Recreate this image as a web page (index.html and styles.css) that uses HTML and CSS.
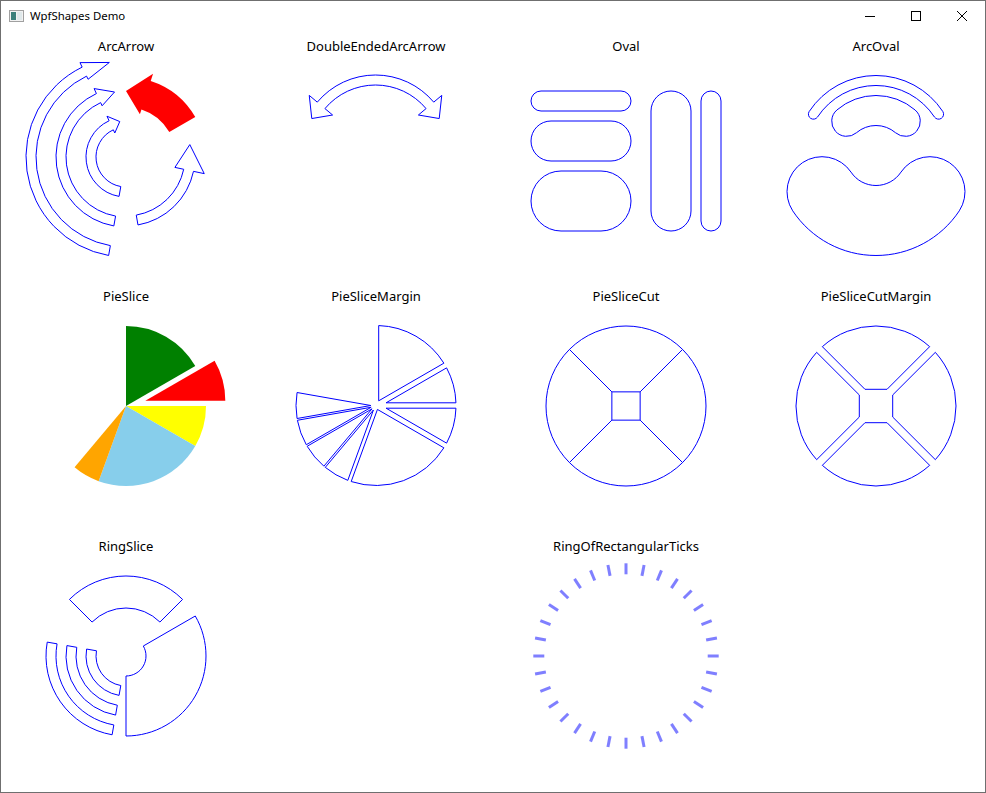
FILE: index.html
```html
<!DOCTYPE html>
<html lang="en">
<head>
<meta charset="utf-8">
<title>WpfShapes Demo</title>
<link rel="stylesheet" href="styles.css">
</head>
<body>
<div class="window">
  <div class="titlebar">
    <svg class="app-icon" viewBox="0 0 16 16" width="16" height="16">
      <rect x="1.5" y="2.5" width="14" height="11" fill="#f2f2f2" stroke="#a0a0a0"/>
      <rect x="3" y="4" width="5" height="8" fill="#3b7f7a"/>
      <rect x="9" y="4" width="5" height="8" fill="#dfe8ea"/>
    </svg>
    <span class="title">WpfShapes Demo</span>
    <div class="controls">
      <div class="ctl"><svg width="10" height="10" viewBox="0 0 10 10"><line x1="0" y1="5.5" x2="10" y2="5.5" class="glyph"/></svg></div>
      <div class="ctl"><svg width="10" height="10" viewBox="0 0 10 10"><rect x="0.5" y="0.5" width="9" height="9" class="glyph"/></svg></div>
      <div class="ctl"><svg width="10" height="10" viewBox="0 0 10 10"><path d="M0 0 L10 10 M10 0 L0 10" class="glyph"/></svg></div>
    </div>
  </div>
  <div class="content">
    <div class="cell">
      <div class="label">ArcArrow</div>
      <svg class="shape" viewBox="1 54 250 227">
        <path id="aa1" class="outline"/>
        <path id="aa2" class="outline"/>
        <path id="aa3" class="outline"/>
        <path id="aa4" class="red"/>
        <path id="aa5" class="outline"/>
      </svg>
    </div>
    <div class="cell">
      <div class="label">DoubleEndedArcArrow</div>
      <svg class="shape" viewBox="251 54 250 227">
        <path id="dea" class="outline"/>
      </svg>
    </div>
    <div class="cell">
      <div class="label">Oval</div>
      <svg class="shape" viewBox="501 54 250 227">
        <rect class="outline" x="531" y="91" width="100" height="20" rx="10"/>
        <rect class="outline" x="531" y="121" width="100" height="40" rx="20"/>
        <rect class="outline" x="531" y="171" width="100" height="60" rx="30"/>
        <rect class="outline" x="651" y="91" width="40" height="140" rx="20"/>
        <rect class="outline" x="701" y="91" width="20" height="140" rx="10"/>
      </svg>
    </div>
    <div class="cell">
      <div class="label">ArcOval</div>
      <svg class="shape" viewBox="751 54 250 227">
        <path id="ao1" class="outline"/>
        <path id="ao2" class="outline"/>
        <path id="ao3" class="outline"/>
      </svg>
    </div>

    <div class="cell">
      <div class="label">PieSlice</div>
      <svg class="shape" viewBox="1 304 250 227">
        <path id="ps1" class="f-green"/>
        <path id="ps2" class="f-red"/>
        <path id="ps3" class="f-yellow"/>
        <path id="ps4" class="f-sky"/>
        <path id="ps5" class="f-orange"/>
      </svg>
    </div>
    <div class="cell">
      <div class="label">PieSliceMargin</div>
      <svg class="shape" viewBox="251 304 250 227">
        <path id="pm1" class="outline"/>
        <path id="pm2" class="outline"/>
        <path id="pm3" class="outline"/>
        <path id="pm4" class="outline"/>
        <path id="pm5" class="outline"/>
        <path id="pm6" class="outline"/>
        <path id="pm7" class="outline"/>
        <path id="pm8" class="outline"/>
      </svg>
    </div>
    <div class="cell">
      <div class="label">PieSliceCut</div>
      <svg class="shape" viewBox="501 304 250 227">
        <circle class="outline" cx="626" cy="406" r="80"/>
        <rect class="outline" x="611.86" y="391.86" width="28.28" height="28.28"/>
        <path class="outline" d="M 611.86 391.86 L 569.43 349.43 M 640.14 391.86 L 682.57 349.43 M 640.14 420.14 L 682.57 462.57 M 611.86 420.14 L 569.43 462.57"/>
      </svg>
    </div>
    <div class="cell">
      <div class="label">PieSliceCutMargin</div>
      <svg class="shape" viewBox="751 304 250 227">
        <path id="pcm1" class="outline"/>
        <path id="pcm2" class="outline"/>
        <path id="pcm3" class="outline"/>
        <path id="pcm4" class="outline"/>
      </svg>
    </div>

    <div class="cell">
      <div class="label">RingSlice</div>
      <svg class="shape" viewBox="1 554 250 227">
        <path id="rs1" class="outline"/>
        <path id="rs2" class="outline"/>
        <path id="rs3" class="outline"/>
        <path id="rs4" class="outline"/>
        <path id="rs5" class="outline"/>
      </svg>
    </div>
    <div class="cell"></div>
    <div class="cell">
      <div class="label">RingOfRectangularTicks</div>
      <svg class="shape" viewBox="501 554 250 227">
        <g id="ticks" class="ticks"></g>
      </svg>
    </div>
    <div class="cell"></div>
  </div>
</div>
<script src="script.js"></script>
</body>
</html>
```

FILE: styles.css
```css
html, body {
  margin: 0;
  padding: 0;
  background: #ffffff;
}

body {
  font-family: "Noto Sans", "Open Sans", sans-serif;
  font-size: 13px;
  color: #000000;
}

.window {
  box-sizing: border-box;
  width: 986px;
  height: 793px;
  border: 1px solid #6f6f6f;
  background: #ffffff;
  overflow: hidden;
}

.titlebar {
  height: 30px;
  display: flex;
  align-items: center;
}

.app-icon {
  display: block;
  margin-left: 7px;
  flex: none;
}

.title {
  margin-left: 6px;
  font-size: 11.4px;
  line-height: 16px;
}

.controls {
  margin-left: auto;
  display: flex;
}

.ctl {
  width: 46px;
  height: 30px;
  display: flex;
  align-items: center;
  justify-content: center;
}

.ctl svg {
  display: block;
}

.glyph {
  fill: none;
  stroke: #000000;
  stroke-width: 1;
}

.content {
  display: grid;
  grid-template-columns: repeat(4, 250px);
  grid-auto-rows: 250px;
  width: 984px;
  height: 761px;
  overflow: hidden;
}

.cell {
  display: flex;
  flex-direction: column;
  align-items: center;
  min-width: 0;
}

.label {
  padding-top: 7px;
  height: 16px;
  line-height: 16px;
  white-space: nowrap;
}

.shape {
  display: block;
  flex: none;
  width: 250px;
  height: 227px;
}

.outline {
  fill: none;
  stroke: #0000ff;
  stroke-width: 1;
}

.red { fill: #ff0000; }
.f-green { fill: #008000; }
.f-red { fill: #ff0000; }
.f-yellow { fill: #ffff00; }
.f-sky { fill: #87ceeb; }
.f-orange { fill: #ffa500; }

.ticks line {
  stroke: #0000ff;
  stroke-opacity: 0.5;
  stroke-width: 3;
}
```

FILE: script.js
```js
(function () {
  var D = Math.PI / 180;
  function P(cx, cy, r, a) { return [cx + r * Math.cos(a * D), cy + r * Math.sin(a * D)]; }
  function s(p) { return p[0].toFixed(2) + ' ' + p[1].toFixed(2); }
  function A(cx, cy, r, a0, a1) {
    var d = a1 - a0;
    return ' A ' + r + ' ' + r + ' 0 ' + (Math.abs(d) > 180 ? 1 : 0) + ' ' + (d > 0 ? 1 : 0) + ' ' + s(P(cx, cy, r, a1));
  }
  function set(id, d) { var el = document.getElementById(id); if (el) { el.setAttribute('d', d); } }

  function ring(cx, cy, ri, ro, a0, a1) {
    return 'M ' + s(P(cx, cy, ro, a0)) + A(cx, cy, ro, a0, a1) +
      ' L ' + s(P(cx, cy, ri, a1)) + A(cx, cy, ri, a1, a0) + ' Z';
  }

  function arrow(o) {
    var cx = o.cx, cy = o.cy;
    return 'M ' + s(P(cx, cy, o.ro, o.a0)) + A(cx, cy, o.ro, o.a0, o.ab) +
      ' L ' + s(P(cx, cy, o.bo, o.ab)) +
      ' L ' + s(P(cx, cy, o.rt, o.at)) +
      ' L ' + s(P(cx, cy, o.bi, o.ab)) +
      ' L ' + s(P(cx, cy, o.ri, o.ab)) + A(cx, cy, o.ri, o.ab, o.a0) + ' Z';
  }

  function dbl(o) {
    var cx = o.cx, cy = o.cy;
    return 'M ' + s(P(cx, cy, o.ro, o.a0)) + A(cx, cy, o.ro, o.a0, o.a1) +
      ' L ' + s(P(cx, cy, o.bo, o.a1)) +
      ' L ' + s(P(cx, cy, o.rt, o.at1)) +
      ' L ' + s(P(cx, cy, o.bi, o.a1)) +
      ' L ' + s(P(cx, cy, o.ri, o.a1)) + A(cx, cy, o.ri, o.a1, o.a0) +
      ' L ' + s(P(cx, cy, o.bi, o.a0)) +
      ' L ' + s(P(cx, cy, o.rt, o.at0)) +
      ' L ' + s(P(cx, cy, o.bo, o.a0)) + ' Z';
  }

  function arcOval(cx, cy, rm, h, a0, a1) {
    var ro = rm + h, ri = rm - h;
    return 'M ' + s(P(cx, cy, ro, a0)) + A(cx, cy, ro, a0, a1) +
      ' A ' + h + ' ' + h + ' 0 0 1 ' + s(P(cx, cy, ri, a1)) +
      A(cx, cy, ri, a1, a0) +
      ' A ' + h + ' ' + h + ' 0 0 1 ' + s(P(cx, cy, ro, a0)) + ' Z';
  }

  function wedge(cx, cy, r, a0, a1, off) {
    var c = P(cx, cy, off || 0, (a0 + a1) / 2);
    return 'M ' + s(c) + ' L ' + s(P(c[0], c[1], r, a0)) + A(c[0], c[1], r, a0, a1) + ' Z';
  }

  /* slice whose two straight edges are shifted inwards by o0 / o1, arc kept on the centre */
  function marginSlice(cx, cy, R, a0, a1, o0, o1) {
    var u0 = [Math.cos(a0 * D), Math.sin(a0 * D)], u1 = [Math.cos(a1 * D), Math.sin(a1 * D)];
    var n0 = [-u0[1], u0[0]], n1 = [u1[1], -u1[0]];
    var p0 = [o0 * n0[0], o0 * n0[1]], p1 = [o1 * n1[0], o1 * n1[1]];
    function cr(a, b) { return a[0] * b[1] - a[1] * b[0]; }
    var t0 = cr([p1[0] - p0[0], p1[1] - p0[1]], u1) / cr(u0, u1);
    var apex = [cx + p0[0] + t0 * u0[0], cy + p0[1] + t0 * u0[1]];
    var s0 = Math.sqrt(R * R - o0 * o0), s1 = Math.sqrt(R * R - o1 * o1);
    var e0 = [cx + p0[0] + s0 * u0[0], cy + p0[1] + s0 * u0[1]];
    var e1 = [cx + p1[0] + s1 * u1[0], cy + p1[1] + s1 * u1[1]];
    var span = a1 - a0;
    return 'M ' + s(apex) + ' L ' + s(e0) + ' A ' + R + ' ' + R + ' 0 ' + (span > 180 ? 1 : 0) + ' 1 ' + s(e1) + ' Z';
  }

  function cutSlice(cx, cy, b, cut, off, R, h) {
    var hb = h * D, bb = b * D;
    function rot(u, v) {
      return [cx + u * Math.cos(bb) - v * Math.sin(bb), cy + u * Math.sin(bb) + v * Math.cos(bb)];
    }
    var t1 = (cut - off * Math.sin(hb)) / Math.cos(hb);
    var vc = off * Math.cos(hb) - t1 * Math.sin(hb);
    var t2 = Math.sqrt(R * R - off * off);
    var uo = off * Math.sin(hb) + t2 * Math.cos(hb);
    var vo = off * Math.cos(hb) - t2 * Math.sin(hb);
    return 'M ' + s(rot(cut, vc)) + ' L ' + s(rot(uo, vo)) +
      ' A ' + R + ' ' + R + ' 0 0 1 ' + s(rot(uo, -vo)) +
      ' L ' + s(rot(cut, -vc)) + ' Z';
  }

  /* ArcArrow */
  var C1x = 126, C1y = 157;
  set('aa1', arrow({ cx: C1x, cy: C1y, ri: 90, ro: 100, a0: 100, ab: 244, at: 260, rt: 96, bo: 105, bi: 86.5 }));
  set('aa2', arrow({ cx: C1x, cy: C1y, ri: 60, ro: 70, a0: 100, ab: 245, at: 260, rt: 66, bo: 75.5, bi: 56.5 }));
  set('aa3', arrow({ cx: C1x, cy: C1y, ri: 30, ro: 40, a0: 100, ab: 245, at: 260, rt: 36, bo: 45, bi: 26.5 }));
  set('aa4', arrow({ cx: C1x, cy: C1y, ri: 50, ro: 80, a0: 330, ab: 288, at: 270, rt: 66, bo: 87.5, bi: 45 }));
  set('aa5', arrow({ cx: C1x, cy: C1y, ri: 59, ro: 69, a0: 80, ab: 12, at: -11, rt: 65, bo: 80, bi: 50 }));

  /* DoubleEndedArcArrow */
  set('dea', dbl({ cx: 375.5, cy: 151, ri: 66, ro: 76, a0: 220, a1: 320, at0: 207, at1: 333, rt: 71.5, bo: 86.5, bi: 56 }));

  /* ArcOval */
  set('ao1', arcOval(876, 155.5, 75, 5, 213.3, 326.7));
  set('ao2', arcOval(876, 155.5, 45, 15, 229.4, 310.6));
  set('ao3', arcOval(876, 155.5, 65, 35, 33.6, 146.4));

  /* PieSlice */
  set('ps1', wedge(126, 406, 80, 270, 330, 0));
  set('ps2', wedge(126, 406, 80, 330, 360, 20));
  set('ps3', wedge(126, 406, 80, 0, 30, 0));
  set('ps4', wedge(126, 406, 80, 30, 110, 0));
  set('ps5', wedge(126, 406, 80, 110, 130, 0));

  /* PieSliceMargin */
  var pmx = 376, pmy = 405.5, big = 2.7, thin = 0.9;
  set('pm1', marginSlice(pmx, pmy, 80, 270, 330, big, big));
  set('pm2', marginSlice(pmx, pmy, 80, 330, 360, big, big));
  set('pm3', marginSlice(pmx, pmy, 80, 0, 30, big, big));
  set('pm4', marginSlice(pmx, pmy, 80, 30, 110, big, big));
  set('pm5', marginSlice(pmx, pmy, 80, 110, 130, thin, thin));
  set('pm6', marginSlice(pmx, pmy, 80, 130, 150, thin, thin));
  set('pm7', marginSlice(pmx, pmy, 80, 150, 170, thin, thin));
  set('pm8', marginSlice(pmx, pmy, 80, 170, 190, thin, thin));

  /* PieSliceCutMargin */
  set('pcm1', cutSlice(876, 406, 270, 16.7, 4, 80, 45));
  set('pcm2', cutSlice(876, 406, 0, 16.7, 4, 80, 45));
  set('pcm3', cutSlice(876, 406, 90, 16.7, 4, 80, 45));
  set('pcm4', cutSlice(876, 406, 180, 16.7, 4, 80, 45));

  /* RingSlice */
  var rx = 126, ry = 656;
  set('rs1', ring(rx, ry, 48, 80, 225, 315));
  set('rs2', ring(rx, ry, 20, 80, -30, 90));
  set('rs3', ring(rx, ry, 70, 80, 100, 190));
  set('rs4', ring(rx, ry, 50, 60, 100, 190));
  set('rs5', ring(rx, ry, 30, 40, 100, 190));

  /* RingOfRectangularTicks */
  var g = document.getElementById('ticks');
  var NS = 'http://www.w3.org/2000/svg';
  for (var i = 0; i < 32; i++) {
    var a = i * 11.25 - 90;
    var p1 = P(626, 656, 81.7, a), p2 = P(626, 656, 92.7, a);
    var ln = document.createElementNS(NS, 'line');
    ln.setAttribute('x1', p1[0].toFixed(2));
    ln.setAttribute('y1', p1[1].toFixed(2));
    ln.setAttribute('x2', p2[0].toFixed(2));
    ln.setAttribute('y2', p2[1].toFixed(2));
    g.appendChild(ln);
  }
})();
```
